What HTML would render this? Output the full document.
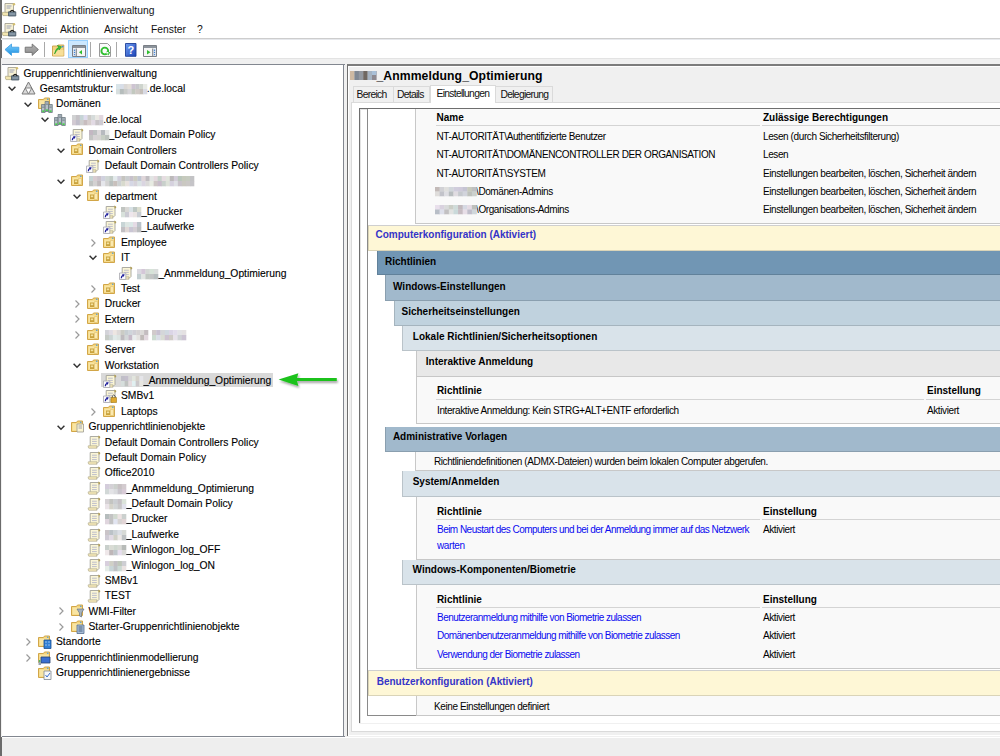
<!DOCTYPE html><html><head><meta charset="utf-8"><style>
*{margin:0;padding:0;box-sizing:border-box}
html,body{width:1000px;height:756px;overflow:hidden;background:#fff;font-family:"Liberation Sans", sans-serif;}
.ab{position:absolute}
.t{position:absolute;white-space:nowrap;color:#000;line-height:1}
.tr{font-size:10.3px;-webkit-text-stroke:0.12px #000}
.rp{font-size:10px;letter-spacing:-0.4px}
.rb{font-size:10px;font-weight:bold}
.blur{display:inline-block;vertical-align:-1px;height:8px}
svg{position:absolute;overflow:visible}

</style></head><body>
<div class="ab" style="left:0;top:0;width:1.5px;height:756px;background:#6b6b6b"></div>
<div class="t" style="left:21px;top:5.5px;font-size:10.3px;color:#111">Gruppenrichtlinienverwaltung</div>
<div class="t" style="left:23px;top:24.5px;font-size:10.3px;color:#111">Datei</div>
<div class="t" style="left:60px;top:24.5px;font-size:10.3px;color:#111">Aktion</div>
<div class="t" style="left:104px;top:24.5px;font-size:10.3px;color:#111">Ansicht</div>
<div class="t" style="left:151px;top:24.5px;font-size:10.3px;color:#111">Fenster</div>
<div class="t" style="left:197px;top:24.5px;font-size:10.3px;color:#111">?</div>
<div class="ab" style="left:1px;top:38px;width:999px;height:1px;background:#cdcdcd"></div>
<div class="ab" style="left:1px;top:39px;width:999px;height:1px;background:#e6e8ec"></div>
<div class="ab" style="left:1px;top:58px;width:999px;height:1px;background:#e3e3e3"></div>
<div class="ab" style="left:1px;top:59px;width:999px;height:678px;background:#f0f0f0"></div>
<div class="ab" style="left:1.5px;top:738px;width:999px;height:18px;background:#eeeeee"></div>
<div class="ab" style="left:44px;top:42px;width:1px;height:15px;background:#a9a9a9"></div>
<div class="ab" style="left:90px;top:42px;width:1px;height:15px;background:#a9a9a9"></div>
<div class="ab" style="left:116px;top:42px;width:1px;height:15px;background:#a9a9a9"></div>
<div class="ab" style="left:68px;top:40px;width:20px;height:18px;background:#cce8ff;border:1px solid #99d1ff"></div>
<svg style="left:0;top:0px" width="20" height="20" viewBox="0 0 20 20"><path d="M5 3.5 H13.5 V12.5 H5 Z" fill="#f7f1d3" stroke="#a5a294" stroke-width="0.9"/><circle cx="14" cy="4.2" r="1.2" fill="#d2bd6e"/><path d="M6.5 6 H11.5 M6.5 8 H10.5" stroke="#9aa0b8" stroke-width="1"/><path d="M2.5 12.3 H9 V15.6 H3 Q2 14 2.5 12.3 Z" fill="#f3e6b0" stroke="#b5ad88" stroke-width="0.8"/><path d="M8.5 11.8 H15.8 V16 H8.5 Z" fill="#6f8393" stroke="#4a5866" stroke-width="0.8"/><path d="M10 12 Q12.2 8.6 14.3 12" stroke="#1e1e1e" fill="none" stroke-width="1.2"/><path d="M9.5 14 H15 " stroke="#a9b6c0" stroke-width="0.8"/></svg>
<svg style="left:0;top:20px" width="20" height="20" viewBox="0 0 20 20"><path d="M5 3.5 H13.5 V12.5 H5 Z" fill="#f7f1d3" stroke="#a5a294" stroke-width="0.9"/><circle cx="14" cy="4.2" r="1.2" fill="#d2bd6e"/><path d="M6.5 6 H11.5 M6.5 8 H10.5" stroke="#9aa0b8" stroke-width="1"/><path d="M2.5 12.3 H9 V15.6 H3 Q2 14 2.5 12.3 Z" fill="#f3e6b0" stroke="#b5ad88" stroke-width="0.8"/><path d="M8.5 11.8 H15.8 V16 H8.5 Z" fill="#6f8393" stroke="#4a5866" stroke-width="0.8"/><path d="M10 12 Q12.2 8.6 14.3 12" stroke="#1e1e1e" fill="none" stroke-width="1.2"/><path d="M9.5 14 H15 " stroke="#a9b6c0" stroke-width="0.8"/></svg>
<svg style="left:0;top:38px" width="60" height="22" viewBox="0 38 60 22"><defs><linearGradient id="gb" x1="0" y1="0" x2="0" y2="1"><stop offset="0" stop-color="#7fd0ff"/><stop offset="1" stop-color="#1a8fe0"/></linearGradient><linearGradient id="gg" x1="0" y1="0" x2="0" y2="1"><stop offset="0" stop-color="#b5b5b5"/><stop offset="1" stop-color="#8a8a8a"/></linearGradient></defs><path d="M5 49.6 L11.5 44 V47.2 H18.8 V52.4 H11.5 V55.4 Z" fill="url(#gb)" stroke="#3a9ae0" stroke-width="0.8" stroke-linejoin="round"/><path d="M38.4 49.6 L32.2 44 V47.2 H25.2 V52.4 H32.2 V55.4 Z" fill="url(#gg)" stroke="#6e6e6e" stroke-width="0.9" stroke-linejoin="round"/></svg>
<svg style="left:50px;top:42px" width="18" height="16" viewBox="0 0 18 16"><path d="M2.5 4 H7 L8 3 H13.8 V14 H2.5 Z" fill="#f3d27c" stroke="#c9a04c" stroke-width="0.9"/><path d="M3 8 H13.5 V13.6 H3 Z" fill="#f7df98"/><path d="M4.5 12 Q5.5 6.5 8.5 5.5 L7.5 3.5 L11.5 4.8 L9.2 8 L9 6.5 Q6.5 8 4.5 12 Z" fill="#39c43a" stroke="#1f9a22" stroke-width="0.6"/><circle cx="12.6" cy="4.6" r="0.9" fill="#3a8ee0"/></svg>
<svg style="left:71.5px;top:44.5px" width="15" height="13" viewBox="0 0 15 13"><path d="M0.5 0.5 H13.5 V11.5 H0.5 Z" fill="#f6f6f6" stroke="#7a7f86" stroke-width="1"/><path d="M1 1 H13 V3 H1 Z" fill="#8c939b"/><path d="M1 3.5 H4 V11 H1 Z" fill="#dfe6ee"/><path d="M4.3 3.5 V11" stroke="#7a7f86"/><circle cx="2.5" cy="5.2" r="0.7" fill="#3b7fd6"/><circle cx="2.5" cy="7.4" r="0.7" fill="#3b7fd6"/><circle cx="2.5" cy="9.6" r="0.7" fill="#3b7fd6"/><path d="M7 7.3 L10 5 V9.6 Z" fill="#2fbf2f"/></svg>
<svg style="left:143px;top:44.5px" width="15" height="13" viewBox="0 0 15 13"><path d="M0.5 0.5 H13.5 V11.5 H0.5 Z" fill="#f6f6f6" stroke="#7a7f86" stroke-width="1"/><path d="M1 1 H13 V3 H1 Z" fill="#8c939b"/><path d="M10 3.5 H13 V11 H10 Z" fill="#dfe6ee"/><path d="M9.7 3.5 V11" stroke="#7a7f86"/><circle cx="11.5" cy="5.2" r="0.7" fill="#3b7fd6"/><circle cx="11.5" cy="7.4" r="0.7" fill="#3b7fd6"/><circle cx="11.5" cy="9.6" r="0.7" fill="#3b7fd6"/><path d="M7.5 7.3 L4 5 V9.6 Z" fill="#2fbf2f"/></svg>
<svg style="left:98.5px;top:42.5px" width="13" height="15" viewBox="0 0 13 15"><path d="M0.5 0.5 H8.5 L11.5 3.5 V13.5 H0.5 Z" fill="#fbfbfb" stroke="#8f8f8f" stroke-width="0.9"/><circle cx="5.8" cy="8" r="3.4" fill="none" stroke="#2fbf2f" stroke-width="1.9"/><path d="M7.2 8.6 L11.4 9.2 L9.2 12.6 Z" fill="#2fbf2f"/><rect x="7.4" y="9" width="2" height="1.6" fill="#fbfbfb"/></svg>
<svg style="left:124.5px;top:42.5px" width="12" height="14" viewBox="0 0 12 14"><defs><linearGradient id="gh" x1="0" y1="0" x2="1" y2="1"><stop offset="0" stop-color="#6f9cf0"/><stop offset="1" stop-color="#1c44b8"/></linearGradient></defs><path d="M0.5 0.5 H11 V13.3 H0.5 Z" fill="url(#gh)" stroke="#1e3f99" stroke-width="0.9"/><text x="5.8" y="11" font-family="Liberation Sans" font-weight="bold" font-size="11" fill="#fff" text-anchor="middle">?</text></svg>
<div class="ab" style="left:2px;top:64px;width:342px;height:673px;background:#fff;border:1px solid #828790;border-left:none"></div>
<div class="ab" style="left:1.5px;top:64px;width:343px;height:1px;background:#828790"></div>
<div class="ab" style="left:1.5px;top:736px;width:343px;height:1.2px;background:#828790"></div>
<svg style="left:2.70px;top:64.00px" width="20" height="20" viewBox="0 0 20 20"><path d="M5 3.5 H13.5 V12.5 H5 Z" fill="#f7f1d3" stroke="#a5a294" stroke-width="0.9"/><circle cx="14" cy="4.2" r="1.2" fill="#d2bd6e"/><path d="M6.5 6 H11.5 M6.5 8 H10.5" stroke="#9aa0b8" stroke-width="1"/><path d="M2.5 12.3 H9 V15.6 H3 Q2 14 2.5 12.3 Z" fill="#f3e6b0" stroke="#b5ad88" stroke-width="0.8"/><path d="M8.5 11.8 H15.8 V16 H8.5 Z" fill="#6f8393" stroke="#4a5866" stroke-width="0.8"/><path d="M10 12 Q12.2 8.6 14.3 12" stroke="#1e1e1e" fill="none" stroke-width="1.2"/><path d="M9.5 14 H15 " stroke="#a9b6c0" stroke-width="0.8"/></svg>
<div class="t tr" style="left:23.5px;top:68.70px">Gruppenrichtlinienverwaltung</div>
<svg style="left:8.0px;top:86.37px" width="8" height="5"><path d="M0.6 0.8 L4 4.2 L7.4 0.8" fill="none" stroke="#333" stroke-width="1.5"/></svg>
<svg style="left:21.25px;top:81.37px" width="15" height="14" viewBox="0 0 15 14"><path d="M7.5 1 L14 13 H1 Z" fill="#d9d9d9" stroke="#7a7a7a" stroke-width="1" stroke-linejoin="round"/><path d="M4.25 7 H10.75 L7.5 13 Z" fill="#fff" stroke="#7a7a7a" stroke-width="0.9"/></svg>
<div class="t tr" style="left:39.75px;top:84.07px">Gesamtstruktur: <svg style="position:relative;display:inline-block;vertical-align:-2px" width="31" height="10"><rect x="0.00" y="0.0" width="4.17" height="5.3" fill="#d9e5e9"/><rect x="3.88" y="0.0" width="4.17" height="5.3" fill="#d8dee8"/><rect x="7.75" y="0.0" width="4.17" height="5.3" fill="#dbd8d6"/><rect x="11.62" y="0.0" width="4.17" height="5.3" fill="#e4dfd9"/><rect x="15.50" y="0.0" width="4.17" height="5.3" fill="#cec4d2"/><rect x="19.38" y="0.0" width="4.17" height="5.3" fill="#c7c8cb"/><rect x="23.25" y="0.0" width="4.17" height="5.3" fill="#ced4cd"/><rect x="27.12" y="0.0" width="4.17" height="5.3" fill="#e8eae5"/><rect x="0.00" y="5.0" width="4.17" height="5.3" fill="#d8dfdf"/><rect x="3.88" y="5.0" width="4.17" height="5.3" fill="#b6bdbc"/><rect x="7.75" y="5.0" width="4.17" height="5.3" fill="#c9cbc9"/><rect x="11.62" y="5.0" width="4.17" height="5.3" fill="#d6d5d9"/><rect x="15.50" y="5.0" width="4.17" height="5.3" fill="#c2c8bf"/><rect x="19.38" y="5.0" width="4.17" height="5.3" fill="#cfc9c5"/><rect x="23.25" y="5.0" width="4.17" height="5.3" fill="#c5bfba"/><rect x="27.12" y="5.0" width="4.17" height="5.3" fill="#d8dae4"/></svg>.de.local</div>
<svg style="left:24.25px;top:101.74px" width="8" height="5"><path d="M0.6 0.8 L4 4.2 L7.4 0.8" fill="none" stroke="#333" stroke-width="1.5"/></svg>
<svg style="left:38.00px;top:97.24px" width="14" height="14" viewBox="0 0 14 14"><path d="M0.5 2.5 H5.5 L6.5 1 H11.5 V11.5 H0.5 Z" fill="#f3d57f" stroke="#d2a648" stroke-width="1"/><path d="M1.5 3.5 H10.5 V10.5 H1.5 Z" fill="#f9e5a3"/><circle cx="9.8" cy="2.2" r="0.8" fill="#4a9ae0"/><path d="M3.5 7.5 h3.6 v8 h-3.6 Z" fill="#b5c0c8" stroke="#5f6b74" stroke-width="0.7"/><path d="M4.1 9.1 h2.4 M4.1 10.5 h2.4" stroke="#6f7b84" stroke-width="0.6"/><rect x="4.2" y="13.5" width="2.2" height="1.3" fill="#2fd12f"/><path d="M7.1 4.5 h3.6 v10 h-3.6 Z" fill="#b5c0c8" stroke="#5f6b74" stroke-width="0.7"/><path d="M7.699999999999999 6.1 h2.4 M7.699999999999999 7.5 h2.4" stroke="#6f7b84" stroke-width="0.6"/><rect x="7.8" y="12.5" width="2.2" height="1.3" fill="#2fd12f"/><path d="M10.7 7.5 h3.6 v8 h-3.6 Z" fill="#b5c0c8" stroke="#5f6b74" stroke-width="0.7"/><path d="M11.299999999999999 9.1 h2.4 M11.299999999999999 10.5 h2.4" stroke="#6f7b84" stroke-width="0.6"/><rect x="11.399999999999999" y="13.5" width="2.2" height="1.3" fill="#2fd12f"/></svg>
<div class="t tr" style="left:56.0px;top:99.44px">Domänen</div>
<svg style="left:40.5px;top:117.11px" width="8" height="5"><path d="M0.6 0.8 L4 4.2 L7.4 0.8" fill="none" stroke="#333" stroke-width="1.5"/></svg>
<svg style="left:53.75px;top:112.61px" width="15" height="15" viewBox="0 0 15 15"><path d="M0.5 4.5 h3.6 v8 h-3.6 Z" fill="#b5c0c8" stroke="#5f6b74" stroke-width="0.7"/><path d="M1.1 6.1 h2.4 M1.1 7.5 h2.4" stroke="#6f7b84" stroke-width="0.6"/><rect x="1.2" y="10.5" width="2.2" height="1.3" fill="#2fd12f"/><path d="M4.1 1.5 h3.6 v10 h-3.6 Z" fill="#b5c0c8" stroke="#5f6b74" stroke-width="0.7"/><path d="M4.699999999999999 3.1 h2.4 M4.699999999999999 4.5 h2.4" stroke="#6f7b84" stroke-width="0.6"/><rect x="4.8" y="9.5" width="2.2" height="1.3" fill="#2fd12f"/><path d="M7.7 4.5 h3.6 v8 h-3.6 Z" fill="#b5c0c8" stroke="#5f6b74" stroke-width="0.7"/><path d="M8.3 6.1 h2.4 M8.3 7.5 h2.4" stroke="#6f7b84" stroke-width="0.6"/><rect x="8.4" y="10.5" width="2.2" height="1.3" fill="#2fd12f"/></svg>
<div class="t tr" style="left:72.25px;top:114.81px"><svg style="position:relative;display:inline-block;vertical-align:-2px" width="31" height="10"><rect x="0.00" y="0.0" width="4.17" height="5.3" fill="#d1d2d3"/><rect x="3.88" y="0.0" width="4.17" height="5.3" fill="#c5c2c6"/><rect x="7.75" y="0.0" width="4.17" height="5.3" fill="#c6d4d6"/><rect x="11.62" y="0.0" width="4.17" height="5.3" fill="#dfdcee"/><rect x="15.50" y="0.0" width="4.17" height="5.3" fill="#cdccc9"/><rect x="19.38" y="0.0" width="4.17" height="5.3" fill="#d5dbda"/><rect x="23.25" y="0.0" width="4.17" height="5.3" fill="#e9e8e3"/><rect x="27.12" y="0.0" width="4.17" height="5.3" fill="#e1d7de"/><rect x="0.00" y="5.0" width="4.17" height="5.3" fill="#d2cad3"/><rect x="3.88" y="5.0" width="4.17" height="5.3" fill="#c1becb"/><rect x="7.75" y="5.0" width="4.17" height="5.3" fill="#cecece"/><rect x="11.62" y="5.0" width="4.17" height="5.3" fill="#c8bdbf"/><rect x="15.50" y="5.0" width="4.17" height="5.3" fill="#d7cece"/><rect x="19.38" y="5.0" width="4.17" height="5.3" fill="#e2dae4"/><rect x="23.25" y="5.0" width="4.17" height="5.3" fill="#c9c4c8"/><rect x="27.12" y="5.0" width="4.17" height="5.3" fill="#cecbd2"/></svg>.de.local</div>
<svg style="left:70.00px;top:127.98px" width="14" height="14" viewBox="0 0 14 14"><path d="M3.2 1.5 H12 V10.5 Q11 12 9.5 12.5 H3.2 Z" fill="#fbf6d6" stroke="#a3a19a" stroke-width="0.9"/><path d="M11.3 1 Q13.2 1 12.8 3 L11.5 3" fill="#c9b465" stroke="#9c8a40" stroke-width="0.6"/><path d="M5 4.2 H9.8 M5 6.4 H9.8 M5 8.6 H9.8" stroke="#a4a6c6" stroke-width="0.7"/><path d="M1.3 10.8 H10 Q9 12.5 10 13.2 H1.8 Q0.8 12 1.3 10.8 Z" fill="#f6eab8" stroke="#b3ad90" stroke-width="0.7"/><path d="M0.5 7 H6.8 V13.5 H0.5 Z" fill="#fafafc" stroke="#a8a8ae" stroke-width="0.8"/><path d="M2.3 12.3 Q2.3 10 4.2 9.3" stroke="#1c1c9a" stroke-width="1.3" fill="none"/><path d="M3.2 8 L5.8 8.6 L4.4 11 Z" fill="#1c1c9a"/></svg>
<div class="t tr" style="left:88.5px;top:130.18px"><svg style="position:relative;display:inline-block;vertical-align:-2px" width="20" height="10"><rect x="0.00" y="0.0" width="4.30" height="5.3" fill="#c3b7c2"/><rect x="4.00" y="0.0" width="4.30" height="5.3" fill="#bec1c2"/><rect x="8.00" y="0.0" width="4.30" height="5.3" fill="#dddadc"/><rect x="12.00" y="0.0" width="4.30" height="5.3" fill="#b7babf"/><rect x="16.00" y="0.0" width="4.30" height="5.3" fill="#e4e6e5"/><rect x="0.00" y="5.0" width="4.30" height="5.3" fill="#c3c4c3"/><rect x="4.00" y="5.0" width="4.30" height="5.3" fill="#d7d3d5"/><rect x="8.00" y="5.0" width="4.30" height="5.3" fill="#d5d4d2"/><rect x="12.00" y="5.0" width="4.30" height="5.3" fill="#c7cec4"/><rect x="16.00" y="5.0" width="4.30" height="5.3" fill="#bcc2bd"/></svg>_Default Domain Policy</div>
<svg style="left:56.75px;top:147.85px" width="8" height="5"><path d="M0.6 0.8 L4 4.2 L7.4 0.8" fill="none" stroke="#333" stroke-width="1.5"/></svg>
<svg style="left:70.50px;top:143.35px" width="14" height="14" viewBox="0 0 14 14"><path d="M0.5 2.5 H5.5 L6.5 1 H11.5 V11.5 H0.5 Z" fill="#f3d57f" stroke="#d2a648" stroke-width="1"/><path d="M1.5 3.5 H10.5 V10.5 H1.5 Z" fill="#f9e5a3"/><circle cx="9.8" cy="2.2" r="0.8" fill="#4a9ae0"/><path d="M3 5.5 H7 V10 H3 Z" fill="#c9a23e"/><path d="M3.8 6.5 H6.2 V8.2 H3.8 Z" fill="#f4e2a0"/><path d="M7.5 4.5 H10.5 V10.5 H7.5 Z" fill="#fbe9b0" stroke="#d9b45c" stroke-width="0.5"/></svg>
<div class="t tr" style="left:88.5px;top:145.55px">Domain Controllers</div>
<svg style="left:86.25px;top:158.72px" width="14" height="14" viewBox="0 0 14 14"><path d="M3.2 1.5 H12 V10.5 Q11 12 9.5 12.5 H3.2 Z" fill="#fbf6d6" stroke="#a3a19a" stroke-width="0.9"/><path d="M11.3 1 Q13.2 1 12.8 3 L11.5 3" fill="#c9b465" stroke="#9c8a40" stroke-width="0.6"/><path d="M5 4.2 H9.8 M5 6.4 H9.8 M5 8.6 H9.8" stroke="#a4a6c6" stroke-width="0.7"/><path d="M1.3 10.8 H10 Q9 12.5 10 13.2 H1.8 Q0.8 12 1.3 10.8 Z" fill="#f6eab8" stroke="#b3ad90" stroke-width="0.7"/><path d="M0.5 7 H6.8 V13.5 H0.5 Z" fill="#fafafc" stroke="#a8a8ae" stroke-width="0.8"/><path d="M2.3 12.3 Q2.3 10 4.2 9.3" stroke="#1c1c9a" stroke-width="1.3" fill="none"/><path d="M3.2 8 L5.8 8.6 L4.4 11 Z" fill="#1c1c9a"/></svg>
<div class="t tr" style="left:104.75px;top:160.92px">Default Domain Controllers Policy</div>
<svg style="left:56.75px;top:178.59px" width="8" height="5"><path d="M0.6 0.8 L4 4.2 L7.4 0.8" fill="none" stroke="#333" stroke-width="1.5"/></svg>
<svg style="left:70.50px;top:174.09px" width="14" height="14" viewBox="0 0 14 14"><path d="M0.5 2.5 H5.5 L6.5 1 H11.5 V11.5 H0.5 Z" fill="#f3d57f" stroke="#d2a648" stroke-width="1"/><path d="M1.5 3.5 H10.5 V10.5 H1.5 Z" fill="#f9e5a3"/><circle cx="9.8" cy="2.2" r="0.8" fill="#4a9ae0"/><path d="M3 5.5 H7 V10 H3 Z" fill="#c9a23e"/><path d="M3.8 6.5 H6.2 V8.2 H3.8 Z" fill="#f4e2a0"/><path d="M7.5 4.5 H10.5 V10.5 H7.5 Z" fill="#fbe9b0" stroke="#d9b45c" stroke-width="0.5"/></svg>
<div class="t tr" style="left:88.5px;top:176.29px"><svg style="position:relative;display:inline-block;vertical-align:-2px" width="105" height="10"><rect x="0.00" y="0.0" width="4.34" height="5.3" fill="#c6d5d6"/><rect x="4.04" y="0.0" width="4.34" height="5.3" fill="#d8ccd1"/><rect x="8.08" y="0.0" width="4.34" height="5.3" fill="#cbc3cb"/><rect x="12.12" y="0.0" width="4.34" height="5.3" fill="#d0d1de"/><rect x="16.15" y="0.0" width="4.34" height="5.3" fill="#d0d7d4"/><rect x="20.19" y="0.0" width="4.34" height="5.3" fill="#c3cdc7"/><rect x="24.23" y="0.0" width="4.34" height="5.3" fill="#e4ebed"/><rect x="28.27" y="0.0" width="4.34" height="5.3" fill="#d1cfdc"/><rect x="32.31" y="0.0" width="4.34" height="5.3" fill="#c5c4bf"/><rect x="36.35" y="0.0" width="4.34" height="5.3" fill="#c9cdcf"/><rect x="40.38" y="0.0" width="4.34" height="5.3" fill="#c7c1cb"/><rect x="44.42" y="0.0" width="4.34" height="5.3" fill="#ccccc1"/><rect x="48.46" y="0.0" width="4.34" height="5.3" fill="#c0c6d2"/><rect x="52.50" y="0.0" width="4.34" height="5.3" fill="#e0d6d9"/><rect x="56.54" y="0.0" width="4.34" height="5.3" fill="#c0bdc1"/><rect x="60.58" y="0.0" width="4.34" height="5.3" fill="#e2e5e4"/><rect x="64.62" y="0.0" width="4.34" height="5.3" fill="#e4d9de"/><rect x="68.65" y="0.0" width="4.34" height="5.3" fill="#c5d1ca"/><rect x="72.69" y="0.0" width="4.34" height="5.3" fill="#e6dce1"/><rect x="76.73" y="0.0" width="4.34" height="5.3" fill="#e1e5dd"/><rect x="80.77" y="0.0" width="4.34" height="5.3" fill="#bcb9ba"/><rect x="84.81" y="0.0" width="4.34" height="5.3" fill="#d3cdd9"/><rect x="88.85" y="0.0" width="4.34" height="5.3" fill="#bac6bc"/><rect x="92.88" y="0.0" width="4.34" height="5.3" fill="#c6cabc"/><rect x="96.92" y="0.0" width="4.34" height="5.3" fill="#c6cbc0"/><rect x="100.96" y="0.0" width="4.34" height="5.3" fill="#c3c3c5"/><rect x="0.00" y="5.0" width="4.34" height="5.3" fill="#c0c3c1"/><rect x="4.04" y="5.0" width="4.34" height="5.3" fill="#d3d1d1"/><rect x="8.08" y="5.0" width="4.34" height="5.3" fill="#c1babd"/><rect x="12.12" y="5.0" width="4.34" height="5.3" fill="#e5e6eb"/><rect x="16.15" y="5.0" width="4.34" height="5.3" fill="#d3d3d3"/><rect x="20.19" y="5.0" width="4.34" height="5.3" fill="#b9c0be"/><rect x="24.23" y="5.0" width="4.34" height="5.3" fill="#c8c0bc"/><rect x="28.27" y="5.0" width="4.34" height="5.3" fill="#cdd1d2"/><rect x="32.31" y="5.0" width="4.34" height="5.3" fill="#d8dacd"/><rect x="36.35" y="5.0" width="4.34" height="5.3" fill="#e8e1de"/><rect x="40.38" y="5.0" width="4.34" height="5.3" fill="#d5d7e5"/><rect x="44.42" y="5.0" width="4.34" height="5.3" fill="#d6d2da"/><rect x="48.46" y="5.0" width="4.34" height="5.3" fill="#dbe3e4"/><rect x="52.50" y="5.0" width="4.34" height="5.3" fill="#dad5e1"/><rect x="56.54" y="5.0" width="4.34" height="5.3" fill="#dbdad9"/><rect x="60.58" y="5.0" width="4.34" height="5.3" fill="#e7ebe2"/><rect x="64.62" y="5.0" width="4.34" height="5.3" fill="#cdc6c5"/><rect x="68.65" y="5.0" width="4.34" height="5.3" fill="#c8bcca"/><rect x="72.69" y="5.0" width="4.34" height="5.3" fill="#c8d0cb"/><rect x="76.73" y="5.0" width="4.34" height="5.3" fill="#dde2d9"/><rect x="80.77" y="5.0" width="4.34" height="5.3" fill="#d5d1de"/><rect x="84.81" y="5.0" width="4.34" height="5.3" fill="#dfe1e5"/><rect x="88.85" y="5.0" width="4.34" height="5.3" fill="#c9c3ca"/><rect x="92.88" y="5.0" width="4.34" height="5.3" fill="#cac8c1"/><rect x="96.92" y="5.0" width="4.34" height="5.3" fill="#cbc8c6"/><rect x="100.96" y="5.0" width="4.34" height="5.3" fill="#c5c4c8"/></svg></div>
<svg style="left:73.0px;top:193.96px" width="8" height="5"><path d="M0.6 0.8 L4 4.2 L7.4 0.8" fill="none" stroke="#333" stroke-width="1.5"/></svg>
<svg style="left:86.75px;top:189.46px" width="14" height="14" viewBox="0 0 14 14"><path d="M0.5 2.5 H5.5 L6.5 1 H11.5 V11.5 H0.5 Z" fill="#f3d57f" stroke="#d2a648" stroke-width="1"/><path d="M1.5 3.5 H10.5 V10.5 H1.5 Z" fill="#f9e5a3"/><circle cx="9.8" cy="2.2" r="0.8" fill="#4a9ae0"/><path d="M3 5.5 H7 V10 H3 Z" fill="#c9a23e"/><path d="M3.8 6.5 H6.2 V8.2 H3.8 Z" fill="#f4e2a0"/><path d="M7.5 4.5 H10.5 V10.5 H7.5 Z" fill="#fbe9b0" stroke="#d9b45c" stroke-width="0.5"/></svg>
<div class="t tr" style="left:104.75px;top:191.66px">department</div>
<svg style="left:102.50px;top:204.83px" width="14" height="14" viewBox="0 0 14 14"><path d="M3.2 1.5 H12 V10.5 Q11 12 9.5 12.5 H3.2 Z" fill="#fbf6d6" stroke="#a3a19a" stroke-width="0.9"/><path d="M11.3 1 Q13.2 1 12.8 3 L11.5 3" fill="#c9b465" stroke="#9c8a40" stroke-width="0.6"/><path d="M5 4.2 H9.8 M5 6.4 H9.8 M5 8.6 H9.8" stroke="#a4a6c6" stroke-width="0.7"/><path d="M1.3 10.8 H10 Q9 12.5 10 13.2 H1.8 Q0.8 12 1.3 10.8 Z" fill="#f6eab8" stroke="#b3ad90" stroke-width="0.7"/><path d="M0.5 7 H6.8 V13.5 H0.5 Z" fill="#fafafc" stroke="#a8a8ae" stroke-width="0.8"/><path d="M2.3 12.3 Q2.3 10 4.2 9.3" stroke="#1c1c9a" stroke-width="1.3" fill="none"/><path d="M3.2 8 L5.8 8.6 L4.4 11 Z" fill="#1c1c9a"/></svg>
<div class="t tr" style="left:121.0px;top:207.03px"><svg style="position:relative;display:inline-block;vertical-align:-2px" width="20" height="10"><rect x="0.00" y="0.0" width="4.30" height="5.3" fill="#c1c5c1"/><rect x="4.00" y="0.0" width="4.30" height="5.3" fill="#d9d8d5"/><rect x="8.00" y="0.0" width="4.30" height="5.3" fill="#d8e1e5"/><rect x="12.00" y="0.0" width="4.30" height="5.3" fill="#bec7c3"/><rect x="16.00" y="0.0" width="4.30" height="5.3" fill="#dcded0"/><rect x="0.00" y="5.0" width="4.30" height="5.3" fill="#d8e1db"/><rect x="4.00" y="5.0" width="4.30" height="5.3" fill="#cbcbd3"/><rect x="8.00" y="5.0" width="4.30" height="5.3" fill="#eee6ec"/><rect x="12.00" y="5.0" width="4.30" height="5.3" fill="#e9e3e2"/><rect x="16.00" y="5.0" width="4.30" height="5.3" fill="#c8ccd2"/></svg>_Drucker</div>
<svg style="left:102.50px;top:220.20px" width="14" height="14" viewBox="0 0 14 14"><path d="M3.2 1.5 H12 V10.5 Q11 12 9.5 12.5 H3.2 Z" fill="#fbf6d6" stroke="#a3a19a" stroke-width="0.9"/><path d="M11.3 1 Q13.2 1 12.8 3 L11.5 3" fill="#c9b465" stroke="#9c8a40" stroke-width="0.6"/><path d="M5 4.2 H9.8 M5 6.4 H9.8 M5 8.6 H9.8" stroke="#a4a6c6" stroke-width="0.7"/><path d="M1.3 10.8 H10 Q9 12.5 10 13.2 H1.8 Q0.8 12 1.3 10.8 Z" fill="#f6eab8" stroke="#b3ad90" stroke-width="0.7"/><path d="M0.5 7 H6.8 V13.5 H0.5 Z" fill="#fafafc" stroke="#a8a8ae" stroke-width="0.8"/><path d="M2.3 12.3 Q2.3 10 4.2 9.3" stroke="#1c1c9a" stroke-width="1.3" fill="none"/><path d="M3.2 8 L5.8 8.6 L4.4 11 Z" fill="#1c1c9a"/></svg>
<div class="t tr" style="left:121.0px;top:222.40px"><svg style="position:relative;display:inline-block;vertical-align:-2px" width="20" height="10"><rect x="0.00" y="0.0" width="4.30" height="5.3" fill="#c8d5d6"/><rect x="4.00" y="0.0" width="4.30" height="5.3" fill="#dde6e3"/><rect x="8.00" y="0.0" width="4.30" height="5.3" fill="#dbe8e7"/><rect x="12.00" y="0.0" width="4.30" height="5.3" fill="#e5dbe5"/><rect x="16.00" y="0.0" width="4.30" height="5.3" fill="#bbc3ca"/><rect x="0.00" y="5.0" width="4.30" height="5.3" fill="#c2c0c4"/><rect x="4.00" y="5.0" width="4.30" height="5.3" fill="#e0d8d6"/><rect x="8.00" y="5.0" width="4.30" height="5.3" fill="#cac6d4"/><rect x="12.00" y="5.0" width="4.30" height="5.3" fill="#d3ced3"/><rect x="16.00" y="5.0" width="4.30" height="5.3" fill="#bbbdbf"/></svg>_Laufwerke</div>
<svg style="left:91.25px;top:238.57px" width="5" height="8"><path d="M0.5 0.5 L4 4 L0.5 7.5" fill="none" stroke="#9a9a9a" stroke-width="1.2"/></svg>
<svg style="left:103.00px;top:235.57px" width="14" height="14" viewBox="0 0 14 14"><path d="M0.5 2.5 H5.5 L6.5 1 H11.5 V11.5 H0.5 Z" fill="#f3d57f" stroke="#d2a648" stroke-width="1"/><path d="M1.5 3.5 H10.5 V10.5 H1.5 Z" fill="#f9e5a3"/><circle cx="9.8" cy="2.2" r="0.8" fill="#4a9ae0"/><path d="M3 5.5 H7 V10 H3 Z" fill="#c9a23e"/><path d="M3.8 6.5 H6.2 V8.2 H3.8 Z" fill="#f4e2a0"/><path d="M7.5 4.5 H10.5 V10.5 H7.5 Z" fill="#fbe9b0" stroke="#d9b45c" stroke-width="0.5"/></svg>
<div class="t tr" style="left:121.0px;top:237.77px">Employee</div>
<svg style="left:89.25px;top:255.44px" width="8" height="5"><path d="M0.6 0.8 L4 4.2 L7.4 0.8" fill="none" stroke="#333" stroke-width="1.5"/></svg>
<svg style="left:103.00px;top:250.94px" width="14" height="14" viewBox="0 0 14 14"><path d="M0.5 2.5 H5.5 L6.5 1 H11.5 V11.5 H0.5 Z" fill="#f3d57f" stroke="#d2a648" stroke-width="1"/><path d="M1.5 3.5 H10.5 V10.5 H1.5 Z" fill="#f9e5a3"/><circle cx="9.8" cy="2.2" r="0.8" fill="#4a9ae0"/><path d="M3 5.5 H7 V10 H3 Z" fill="#c9a23e"/><path d="M3.8 6.5 H6.2 V8.2 H3.8 Z" fill="#f4e2a0"/><path d="M7.5 4.5 H10.5 V10.5 H7.5 Z" fill="#fbe9b0" stroke="#d9b45c" stroke-width="0.5"/></svg>
<div class="t tr" style="left:121.0px;top:253.14px">IT</div>
<svg style="left:118.75px;top:266.31px" width="14" height="14" viewBox="0 0 14 14"><path d="M3.2 1.5 H12 V10.5 Q11 12 9.5 12.5 H3.2 Z" fill="#fbf6d6" stroke="#a3a19a" stroke-width="0.9"/><path d="M11.3 1 Q13.2 1 12.8 3 L11.5 3" fill="#c9b465" stroke="#9c8a40" stroke-width="0.6"/><path d="M5 4.2 H9.8 M5 6.4 H9.8 M5 8.6 H9.8" stroke="#a4a6c6" stroke-width="0.7"/><path d="M1.3 10.8 H10 Q9 12.5 10 13.2 H1.8 Q0.8 12 1.3 10.8 Z" fill="#f6eab8" stroke="#b3ad90" stroke-width="0.7"/><path d="M0.5 7 H6.8 V13.5 H0.5 Z" fill="#fafafc" stroke="#a8a8ae" stroke-width="0.8"/><path d="M2.3 12.3 Q2.3 10 4.2 9.3" stroke="#1c1c9a" stroke-width="1.3" fill="none"/><path d="M3.2 8 L5.8 8.6 L4.4 11 Z" fill="#1c1c9a"/></svg>
<div class="t tr" style="left:137.25px;top:268.51px"><svg style="position:relative;display:inline-block;vertical-align:-2px" width="21" height="10"><rect x="0.00" y="0.0" width="4.50" height="5.3" fill="#dbd9e0"/><rect x="4.20" y="0.0" width="4.50" height="5.3" fill="#d4c7d8"/><rect x="8.40" y="0.0" width="4.50" height="5.3" fill="#d4d8d5"/><rect x="12.60" y="0.0" width="4.50" height="5.3" fill="#d6e3d8"/><rect x="16.80" y="0.0" width="4.50" height="5.3" fill="#dadddc"/><rect x="0.00" y="5.0" width="4.50" height="5.3" fill="#c2ced1"/><rect x="4.20" y="5.0" width="4.50" height="5.3" fill="#e2e5e3"/><rect x="8.40" y="5.0" width="4.50" height="5.3" fill="#c2c8c3"/><rect x="12.60" y="5.0" width="4.50" height="5.3" fill="#c3c5c5"/><rect x="16.80" y="5.0" width="4.50" height="5.3" fill="#b6bebf"/></svg>_Anmmeldung_Optimierung</div>
<svg style="left:91.25px;top:284.68px" width="5" height="8"><path d="M0.5 0.5 L4 4 L0.5 7.5" fill="none" stroke="#9a9a9a" stroke-width="1.2"/></svg>
<svg style="left:103.00px;top:281.68px" width="14" height="14" viewBox="0 0 14 14"><path d="M0.5 2.5 H5.5 L6.5 1 H11.5 V11.5 H0.5 Z" fill="#f3d57f" stroke="#d2a648" stroke-width="1"/><path d="M1.5 3.5 H10.5 V10.5 H1.5 Z" fill="#f9e5a3"/><circle cx="9.8" cy="2.2" r="0.8" fill="#4a9ae0"/><path d="M3 5.5 H7 V10 H3 Z" fill="#c9a23e"/><path d="M3.8 6.5 H6.2 V8.2 H3.8 Z" fill="#f4e2a0"/><path d="M7.5 4.5 H10.5 V10.5 H7.5 Z" fill="#fbe9b0" stroke="#d9b45c" stroke-width="0.5"/></svg>
<div class="t tr" style="left:121.0px;top:283.88px">Test</div>
<svg style="left:75.0px;top:300.05px" width="5" height="8"><path d="M0.5 0.5 L4 4 L0.5 7.5" fill="none" stroke="#9a9a9a" stroke-width="1.2"/></svg>
<svg style="left:86.75px;top:297.05px" width="14" height="14" viewBox="0 0 14 14"><path d="M0.5 2.5 H5.5 L6.5 1 H11.5 V11.5 H0.5 Z" fill="#f3d57f" stroke="#d2a648" stroke-width="1"/><path d="M1.5 3.5 H10.5 V10.5 H1.5 Z" fill="#f9e5a3"/><circle cx="9.8" cy="2.2" r="0.8" fill="#4a9ae0"/><path d="M3 5.5 H7 V10 H3 Z" fill="#c9a23e"/><path d="M3.8 6.5 H6.2 V8.2 H3.8 Z" fill="#f4e2a0"/><path d="M7.5 4.5 H10.5 V10.5 H7.5 Z" fill="#fbe9b0" stroke="#d9b45c" stroke-width="0.5"/></svg>
<div class="t tr" style="left:104.75px;top:299.25px">Drucker</div>
<svg style="left:75.0px;top:315.42px" width="5" height="8"><path d="M0.5 0.5 L4 4 L0.5 7.5" fill="none" stroke="#9a9a9a" stroke-width="1.2"/></svg>
<svg style="left:86.75px;top:312.42px" width="14" height="14" viewBox="0 0 14 14"><path d="M0.5 2.5 H5.5 L6.5 1 H11.5 V11.5 H0.5 Z" fill="#f3d57f" stroke="#d2a648" stroke-width="1"/><path d="M1.5 3.5 H10.5 V10.5 H1.5 Z" fill="#f9e5a3"/><circle cx="9.8" cy="2.2" r="0.8" fill="#4a9ae0"/><path d="M3 5.5 H7 V10 H3 Z" fill="#c9a23e"/><path d="M3.8 6.5 H6.2 V8.2 H3.8 Z" fill="#f4e2a0"/><path d="M7.5 4.5 H10.5 V10.5 H7.5 Z" fill="#fbe9b0" stroke="#d9b45c" stroke-width="0.5"/></svg>
<div class="t tr" style="left:104.75px;top:314.62px">Extern</div>
<svg style="left:75.0px;top:330.79px" width="5" height="8"><path d="M0.5 0.5 L4 4 L0.5 7.5" fill="none" stroke="#9a9a9a" stroke-width="1.2"/></svg>
<svg style="left:86.75px;top:327.79px" width="14" height="14" viewBox="0 0 14 14"><path d="M0.5 2.5 H5.5 L6.5 1 H11.5 V11.5 H0.5 Z" fill="#f3d57f" stroke="#d2a648" stroke-width="1"/><path d="M1.5 3.5 H10.5 V10.5 H1.5 Z" fill="#f9e5a3"/><circle cx="9.8" cy="2.2" r="0.8" fill="#4a9ae0"/><path d="M3 5.5 H7 V10 H3 Z" fill="#c9a23e"/><path d="M3.8 6.5 H6.2 V8.2 H3.8 Z" fill="#f4e2a0"/><path d="M7.5 4.5 H10.5 V10.5 H7.5 Z" fill="#fbe9b0" stroke="#d9b45c" stroke-width="0.5"/></svg>
<div class="t tr" style="left:104.75px;top:329.99px"><svg style="position:relative;display:inline-block;vertical-align:-2px" width="43" height="10"><rect x="0.00" y="0.0" width="4.21" height="5.3" fill="#d3d3d9"/><rect x="3.91" y="0.0" width="4.21" height="5.3" fill="#e0dce4"/><rect x="7.82" y="0.0" width="4.21" height="5.3" fill="#eee6e2"/><rect x="11.73" y="0.0" width="4.21" height="5.3" fill="#dedad9"/><rect x="15.64" y="0.0" width="4.21" height="5.3" fill="#cbccc5"/><rect x="19.55" y="0.0" width="4.21" height="5.3" fill="#c7ced2"/><rect x="23.45" y="0.0" width="4.21" height="5.3" fill="#cfd5db"/><rect x="27.36" y="0.0" width="4.21" height="5.3" fill="#d0cfd6"/><rect x="31.27" y="0.0" width="4.21" height="5.3" fill="#d5d2d3"/><rect x="35.18" y="0.0" width="4.21" height="5.3" fill="#dcdad8"/><rect x="39.09" y="0.0" width="4.21" height="5.3" fill="#c4bdc0"/><rect x="0.00" y="5.0" width="4.21" height="5.3" fill="#c6cbc6"/><rect x="3.91" y="5.0" width="4.21" height="5.3" fill="#ccd5d4"/><rect x="7.82" y="5.0" width="4.21" height="5.3" fill="#e1eae9"/><rect x="11.73" y="5.0" width="4.21" height="5.3" fill="#dde4e1"/><rect x="15.64" y="5.0" width="4.21" height="5.3" fill="#bebbbe"/><rect x="19.55" y="5.0" width="4.21" height="5.3" fill="#d3d7d8"/><rect x="23.45" y="5.0" width="4.21" height="5.3" fill="#c6bac8"/><rect x="27.36" y="5.0" width="4.21" height="5.3" fill="#e9edee"/><rect x="31.27" y="5.0" width="4.21" height="5.3" fill="#e4e2e0"/><rect x="35.18" y="5.0" width="4.21" height="5.3" fill="#c0bab8"/><rect x="39.09" y="5.0" width="4.21" height="5.3" fill="#e2d7de"/></svg><span style="display:inline-block;width:4px"></span><svg style="position:relative;display:inline-block;vertical-align:-2px" width="34" height="10"><rect x="0.00" y="0.0" width="4.55" height="5.3" fill="#d1cacb"/><rect x="4.25" y="0.0" width="4.55" height="5.3" fill="#c8c1d1"/><rect x="8.50" y="0.0" width="4.55" height="5.3" fill="#d4d6d9"/><rect x="12.75" y="0.0" width="4.55" height="5.3" fill="#d0d8e0"/><rect x="17.00" y="0.0" width="4.55" height="5.3" fill="#dbd5e6"/><rect x="21.25" y="0.0" width="4.55" height="5.3" fill="#e2ddeb"/><rect x="25.50" y="0.0" width="4.55" height="5.3" fill="#e3e3e6"/><rect x="29.75" y="0.0" width="4.55" height="5.3" fill="#e4e1e2"/><rect x="0.00" y="5.0" width="4.55" height="5.3" fill="#cddbd1"/><rect x="4.25" y="5.0" width="4.55" height="5.3" fill="#dadde7"/><rect x="8.50" y="5.0" width="4.55" height="5.3" fill="#d9dcd4"/><rect x="12.75" y="5.0" width="4.55" height="5.3" fill="#cdc2d0"/><rect x="17.00" y="5.0" width="4.55" height="5.3" fill="#cfcbc6"/><rect x="21.25" y="5.0" width="4.55" height="5.3" fill="#e7e2ea"/><rect x="25.50" y="5.0" width="4.55" height="5.3" fill="#d0d3d6"/><rect x="29.75" y="5.0" width="4.55" height="5.3" fill="#ccc4d3"/></svg></div>
<svg style="left:86.75px;top:343.16px" width="14" height="14" viewBox="0 0 14 14"><path d="M0.5 2.5 H5.5 L6.5 1 H11.5 V11.5 H0.5 Z" fill="#f3d57f" stroke="#d2a648" stroke-width="1"/><path d="M1.5 3.5 H10.5 V10.5 H1.5 Z" fill="#f9e5a3"/><circle cx="9.8" cy="2.2" r="0.8" fill="#4a9ae0"/><path d="M3 5.5 H7 V10 H3 Z" fill="#c9a23e"/><path d="M3.8 6.5 H6.2 V8.2 H3.8 Z" fill="#f4e2a0"/><path d="M7.5 4.5 H10.5 V10.5 H7.5 Z" fill="#fbe9b0" stroke="#d9b45c" stroke-width="0.5"/></svg>
<div class="t tr" style="left:104.75px;top:345.36px">Server</div>
<svg style="left:73.0px;top:363.03px" width="8" height="5"><path d="M0.6 0.8 L4 4.2 L7.4 0.8" fill="none" stroke="#333" stroke-width="1.5"/></svg>
<svg style="left:86.75px;top:358.53px" width="14" height="14" viewBox="0 0 14 14"><path d="M0.5 2.5 H5.5 L6.5 1 H11.5 V11.5 H0.5 Z" fill="#f3d57f" stroke="#d2a648" stroke-width="1"/><path d="M1.5 3.5 H10.5 V10.5 H1.5 Z" fill="#f9e5a3"/><circle cx="9.8" cy="2.2" r="0.8" fill="#4a9ae0"/><path d="M3 5.5 H7 V10 H3 Z" fill="#c9a23e"/><path d="M3.8 6.5 H6.2 V8.2 H3.8 Z" fill="#f4e2a0"/><path d="M7.5 4.5 H10.5 V10.5 H7.5 Z" fill="#fbe9b0" stroke="#d9b45c" stroke-width="0.5"/></svg>
<div class="t tr" style="left:104.75px;top:360.73px">Workstation</div>
<div class="ab" style="left:101px;top:372.60px;width:172px;height:14.5px;background:#d9d9d9"></div>
<svg style="left:102.50px;top:373.90px" width="14" height="14" viewBox="0 0 14 14"><path d="M3.2 1.5 H12 V10.5 Q11 12 9.5 12.5 H3.2 Z" fill="#fbf6d6" stroke="#a3a19a" stroke-width="0.9"/><path d="M11.3 1 Q13.2 1 12.8 3 L11.5 3" fill="#c9b465" stroke="#9c8a40" stroke-width="0.6"/><path d="M5 4.2 H9.8 M5 6.4 H9.8 M5 8.6 H9.8" stroke="#a4a6c6" stroke-width="0.7"/><path d="M1.3 10.8 H10 Q9 12.5 10 13.2 H1.8 Q0.8 12 1.3 10.8 Z" fill="#f6eab8" stroke="#b3ad90" stroke-width="0.7"/><path d="M0.5 7 H6.8 V13.5 H0.5 Z" fill="#fafafc" stroke="#a8a8ae" stroke-width="0.8"/><path d="M2.3 12.3 Q2.3 10 4.2 9.3" stroke="#1c1c9a" stroke-width="1.3" fill="none"/><path d="M3.2 8 L5.8 8.6 L4.4 11 Z" fill="#1c1c9a"/></svg>
<div class="t tr" style="left:121.0px;top:376.10px"><svg style="position:relative;display:inline-block;vertical-align:-2px" width="22" height="10"><rect x="0.00" y="0.0" width="3.97" height="5.3" fill="#c0bfc8"/><rect x="3.67" y="0.0" width="3.97" height="5.3" fill="#c4bfcc"/><rect x="7.33" y="0.0" width="3.97" height="5.3" fill="#d7d7d7"/><rect x="11.00" y="0.0" width="3.97" height="5.3" fill="#e2e6de"/><rect x="14.67" y="0.0" width="3.97" height="5.3" fill="#d4d1ca"/><rect x="18.33" y="0.0" width="3.97" height="5.3" fill="#e5e5e9"/><rect x="0.00" y="5.0" width="3.97" height="5.3" fill="#d6dedc"/><rect x="3.67" y="5.0" width="3.97" height="5.3" fill="#c0c3c1"/><rect x="7.33" y="5.0" width="3.97" height="5.3" fill="#e5dcdf"/><rect x="11.00" y="5.0" width="3.97" height="5.3" fill="#e1f0f1"/><rect x="14.67" y="5.0" width="3.97" height="5.3" fill="#cbc8ca"/><rect x="18.33" y="5.0" width="3.97" height="5.3" fill="#e8e7e2"/></svg>_Anmmeldung_Optimierung</div>
<svg style="left:102.50px;top:389.27px" width="14" height="14" viewBox="0 0 14 14"><path d="M3.2 1.5 H12 V10.5 Q11 12 9.5 12.5 H3.2 Z" fill="#fbf6d6" stroke="#a3a19a" stroke-width="0.9"/><path d="M11.3 1 Q13.2 1 12.8 3 L11.5 3" fill="#c9b465" stroke="#9c8a40" stroke-width="0.6"/><path d="M5 4.2 H9.8 M5 6.4 H9.8 M5 8.6 H9.8" stroke="#a4a6c6" stroke-width="0.7"/><path d="M1.3 10.8 H10 Q9 12.5 10 13.2 H1.8 Q0.8 12 1.3 10.8 Z" fill="#f6eab8" stroke="#b3ad90" stroke-width="0.7"/><path d="M0.5 7 H6.8 V13.5 H0.5 Z" fill="#fafafc" stroke="#a8a8ae" stroke-width="0.8"/><path d="M2.3 12.3 Q2.3 10 4.2 9.3" stroke="#1c1c9a" stroke-width="1.3" fill="none"/><path d="M3.2 8 L5.8 8.6 L4.4 11 Z" fill="#1c1c9a"/><path d="M8 8.5 H13.5 V13.5 H8 Z" fill="#e0a92e" stroke="#a07818" stroke-width="0.6"/><path d="M9.3 8.5 V7 Q10.75 4.8 12.2 7 V8.5" stroke="#555" fill="none" stroke-width="0.9"/></svg>
<div class="t tr" style="left:121.0px;top:391.47px">SMBv1</div>
<svg style="left:91.25px;top:407.64px" width="5" height="8"><path d="M0.5 0.5 L4 4 L0.5 7.5" fill="none" stroke="#9a9a9a" stroke-width="1.2"/></svg>
<svg style="left:103.00px;top:404.64px" width="14" height="14" viewBox="0 0 14 14"><path d="M0.5 2.5 H5.5 L6.5 1 H11.5 V11.5 H0.5 Z" fill="#f3d57f" stroke="#d2a648" stroke-width="1"/><path d="M1.5 3.5 H10.5 V10.5 H1.5 Z" fill="#f9e5a3"/><circle cx="9.8" cy="2.2" r="0.8" fill="#4a9ae0"/><path d="M3 5.5 H7 V10 H3 Z" fill="#c9a23e"/><path d="M3.8 6.5 H6.2 V8.2 H3.8 Z" fill="#f4e2a0"/><path d="M7.5 4.5 H10.5 V10.5 H7.5 Z" fill="#fbe9b0" stroke="#d9b45c" stroke-width="0.5"/></svg>
<div class="t tr" style="left:121.0px;top:406.84px">Laptops</div>
<svg style="left:56.75px;top:424.51px" width="8" height="5"><path d="M0.6 0.8 L4 4.2 L7.4 0.8" fill="none" stroke="#333" stroke-width="1.5"/></svg>
<svg style="left:70.50px;top:420.01px" width="14" height="14" viewBox="0 0 14 14"><path d="M0.5 2.5 H5.5 L6.5 1 H11.5 V11.5 H0.5 Z" fill="#f3d57f" stroke="#d2a648" stroke-width="1"/><path d="M1.5 3.5 H10.5 V10.5 H1.5 Z" fill="#f9e5a3"/><circle cx="9.8" cy="2.2" r="0.8" fill="#4a9ae0"/><path d="M6 4 H12.5 V12 H6 Z" fill="#fbf5d2" stroke="#9c9a92" stroke-width="0.8"/><path d="M7.5 6 H11 M7.5 8 H11" stroke="#8a8aa8" stroke-width="0.8"/></svg>
<div class="t tr" style="left:88.5px;top:422.21px">Gruppenrichtlinienobjekte</div>
<svg style="left:86.75px;top:435.38px" width="14" height="14" viewBox="0 0 14 14"><path d="M3.2 1.5 H12 V10.5 Q11 12 9.5 12.5 H3.2 Z" fill="#fbf6d6" stroke="#a3a19a" stroke-width="0.9"/><path d="M11.3 1 Q13.2 1 12.8 3 L11.5 3" fill="#c9b465" stroke="#9c8a40" stroke-width="0.6"/><path d="M5 4.2 H9.8 M5 6.4 H9.8 M5 8.6 H9.8" stroke="#a4a6c6" stroke-width="0.7"/><path d="M1.3 10.8 H10 Q9 12.5 10 13.2 H1.8 Q0.8 12 1.3 10.8 Z" fill="#f6eab8" stroke="#b3ad90" stroke-width="0.7"/></svg>
<div class="t tr" style="left:104.75px;top:437.58px">Default Domain Controllers Policy</div>
<svg style="left:86.75px;top:450.75px" width="14" height="14" viewBox="0 0 14 14"><path d="M3.2 1.5 H12 V10.5 Q11 12 9.5 12.5 H3.2 Z" fill="#fbf6d6" stroke="#a3a19a" stroke-width="0.9"/><path d="M11.3 1 Q13.2 1 12.8 3 L11.5 3" fill="#c9b465" stroke="#9c8a40" stroke-width="0.6"/><path d="M5 4.2 H9.8 M5 6.4 H9.8 M5 8.6 H9.8" stroke="#a4a6c6" stroke-width="0.7"/><path d="M1.3 10.8 H10 Q9 12.5 10 13.2 H1.8 Q0.8 12 1.3 10.8 Z" fill="#f6eab8" stroke="#b3ad90" stroke-width="0.7"/></svg>
<div class="t tr" style="left:104.75px;top:452.95px">Default Domain Policy</div>
<svg style="left:86.75px;top:466.12px" width="14" height="14" viewBox="0 0 14 14"><path d="M3.2 1.5 H12 V10.5 Q11 12 9.5 12.5 H3.2 Z" fill="#fbf6d6" stroke="#a3a19a" stroke-width="0.9"/><path d="M11.3 1 Q13.2 1 12.8 3 L11.5 3" fill="#c9b465" stroke="#9c8a40" stroke-width="0.6"/><path d="M5 4.2 H9.8 M5 6.4 H9.8 M5 8.6 H9.8" stroke="#a4a6c6" stroke-width="0.7"/><path d="M1.3 10.8 H10 Q9 12.5 10 13.2 H1.8 Q0.8 12 1.3 10.8 Z" fill="#f6eab8" stroke="#b3ad90" stroke-width="0.7"/></svg>
<div class="t tr" style="left:104.75px;top:468.32px">Office2010</div>
<svg style="left:86.75px;top:481.49px" width="14" height="14" viewBox="0 0 14 14"><path d="M3.2 1.5 H12 V10.5 Q11 12 9.5 12.5 H3.2 Z" fill="#fbf6d6" stroke="#a3a19a" stroke-width="0.9"/><path d="M11.3 1 Q13.2 1 12.8 3 L11.5 3" fill="#c9b465" stroke="#9c8a40" stroke-width="0.6"/><path d="M5 4.2 H9.8 M5 6.4 H9.8 M5 8.6 H9.8" stroke="#a4a6c6" stroke-width="0.7"/><path d="M1.3 10.8 H10 Q9 12.5 10 13.2 H1.8 Q0.8 12 1.3 10.8 Z" fill="#f6eab8" stroke="#b3ad90" stroke-width="0.7"/></svg>
<div class="t tr" style="left:104.75px;top:483.69px"><svg style="position:relative;display:inline-block;vertical-align:-2px" width="21" height="10"><rect x="0.00" y="0.0" width="4.50" height="5.3" fill="#d4cddb"/><rect x="4.20" y="0.0" width="4.50" height="5.3" fill="#d4d1d6"/><rect x="8.40" y="0.0" width="4.50" height="5.3" fill="#ccd0cc"/><rect x="12.60" y="0.0" width="4.50" height="5.3" fill="#c8c1c3"/><rect x="16.80" y="0.0" width="4.50" height="5.3" fill="#d3cbcf"/><rect x="0.00" y="5.0" width="4.50" height="5.3" fill="#d2d8d7"/><rect x="4.20" y="5.0" width="4.50" height="5.3" fill="#e3e3e6"/><rect x="8.40" y="5.0" width="4.50" height="5.3" fill="#dadbde"/><rect x="12.60" y="5.0" width="4.50" height="5.3" fill="#c9c5cc"/><rect x="16.80" y="5.0" width="4.50" height="5.3" fill="#d8cbd6"/></svg>_Anmmeldung_Optimierung</div>
<svg style="left:86.75px;top:496.86px" width="14" height="14" viewBox="0 0 14 14"><path d="M3.2 1.5 H12 V10.5 Q11 12 9.5 12.5 H3.2 Z" fill="#fbf6d6" stroke="#a3a19a" stroke-width="0.9"/><path d="M11.3 1 Q13.2 1 12.8 3 L11.5 3" fill="#c9b465" stroke="#9c8a40" stroke-width="0.6"/><path d="M5 4.2 H9.8 M5 6.4 H9.8 M5 8.6 H9.8" stroke="#a4a6c6" stroke-width="0.7"/><path d="M1.3 10.8 H10 Q9 12.5 10 13.2 H1.8 Q0.8 12 1.3 10.8 Z" fill="#f6eab8" stroke="#b3ad90" stroke-width="0.7"/></svg>
<div class="t tr" style="left:104.75px;top:499.06px"><svg style="position:relative;display:inline-block;vertical-align:-2px" width="21" height="10"><rect x="0.00" y="0.0" width="4.50" height="5.3" fill="#d6d2d5"/><rect x="4.20" y="0.0" width="4.50" height="5.3" fill="#c3c4c1"/><rect x="8.40" y="0.0" width="4.50" height="5.3" fill="#cbced2"/><rect x="12.60" y="0.0" width="4.50" height="5.3" fill="#c5c1c6"/><rect x="16.80" y="0.0" width="4.50" height="5.3" fill="#dbe3da"/><rect x="0.00" y="5.0" width="4.50" height="5.3" fill="#eae4e8"/><rect x="4.20" y="5.0" width="4.50" height="5.3" fill="#d5d3ca"/><rect x="8.40" y="5.0" width="4.50" height="5.3" fill="#d2d5d6"/><rect x="12.60" y="5.0" width="4.50" height="5.3" fill="#c8c7c8"/><rect x="16.80" y="5.0" width="4.50" height="5.3" fill="#e1e2ec"/></svg>_Default Domain Policy</div>
<svg style="left:86.75px;top:512.23px" width="14" height="14" viewBox="0 0 14 14"><path d="M3.2 1.5 H12 V10.5 Q11 12 9.5 12.5 H3.2 Z" fill="#fbf6d6" stroke="#a3a19a" stroke-width="0.9"/><path d="M11.3 1 Q13.2 1 12.8 3 L11.5 3" fill="#c9b465" stroke="#9c8a40" stroke-width="0.6"/><path d="M5 4.2 H9.8 M5 6.4 H9.8 M5 8.6 H9.8" stroke="#a4a6c6" stroke-width="0.7"/><path d="M1.3 10.8 H10 Q9 12.5 10 13.2 H1.8 Q0.8 12 1.3 10.8 Z" fill="#f6eab8" stroke="#b3ad90" stroke-width="0.7"/></svg>
<div class="t tr" style="left:104.75px;top:514.43px"><svg style="position:relative;display:inline-block;vertical-align:-2px" width="21" height="10"><rect x="0.00" y="0.0" width="4.50" height="5.3" fill="#b6bdbd"/><rect x="4.20" y="0.0" width="4.50" height="5.3" fill="#c3c3c3"/><rect x="8.40" y="0.0" width="4.50" height="5.3" fill="#d1d9cf"/><rect x="12.60" y="0.0" width="4.50" height="5.3" fill="#ede3e3"/><rect x="16.80" y="0.0" width="4.50" height="5.3" fill="#cbd0ce"/><rect x="0.00" y="5.0" width="4.50" height="5.3" fill="#e0d6de"/><rect x="4.20" y="5.0" width="4.50" height="5.3" fill="#c3c3c4"/><rect x="8.40" y="5.0" width="4.50" height="5.3" fill="#e2e5f1"/><rect x="12.60" y="5.0" width="4.50" height="5.3" fill="#d7d4d3"/><rect x="16.80" y="5.0" width="4.50" height="5.3" fill="#e2d5d6"/></svg>_Drucker</div>
<svg style="left:86.75px;top:527.60px" width="14" height="14" viewBox="0 0 14 14"><path d="M3.2 1.5 H12 V10.5 Q11 12 9.5 12.5 H3.2 Z" fill="#fbf6d6" stroke="#a3a19a" stroke-width="0.9"/><path d="M11.3 1 Q13.2 1 12.8 3 L11.5 3" fill="#c9b465" stroke="#9c8a40" stroke-width="0.6"/><path d="M5 4.2 H9.8 M5 6.4 H9.8 M5 8.6 H9.8" stroke="#a4a6c6" stroke-width="0.7"/><path d="M1.3 10.8 H10 Q9 12.5 10 13.2 H1.8 Q0.8 12 1.3 10.8 Z" fill="#f6eab8" stroke="#b3ad90" stroke-width="0.7"/></svg>
<div class="t tr" style="left:104.75px;top:529.80px"><svg style="position:relative;display:inline-block;vertical-align:-2px" width="21" height="10"><rect x="0.00" y="0.0" width="4.50" height="5.3" fill="#cac4c8"/><rect x="4.20" y="0.0" width="4.50" height="5.3" fill="#bbc2c7"/><rect x="8.40" y="0.0" width="4.50" height="5.3" fill="#ccd2d6"/><rect x="12.60" y="0.0" width="4.50" height="5.3" fill="#dbdfe5"/><rect x="16.80" y="0.0" width="4.50" height="5.3" fill="#d7dad6"/><rect x="0.00" y="5.0" width="4.50" height="5.3" fill="#cfcbd5"/><rect x="4.20" y="5.0" width="4.50" height="5.3" fill="#e1dae4"/><rect x="8.40" y="5.0" width="4.50" height="5.3" fill="#cfd0c6"/><rect x="12.60" y="5.0" width="4.50" height="5.3" fill="#ece8e6"/><rect x="16.80" y="5.0" width="4.50" height="5.3" fill="#bec2c4"/></svg>_Laufwerke</div>
<svg style="left:86.75px;top:542.97px" width="14" height="14" viewBox="0 0 14 14"><path d="M3.2 1.5 H12 V10.5 Q11 12 9.5 12.5 H3.2 Z" fill="#fbf6d6" stroke="#a3a19a" stroke-width="0.9"/><path d="M11.3 1 Q13.2 1 12.8 3 L11.5 3" fill="#c9b465" stroke="#9c8a40" stroke-width="0.6"/><path d="M5 4.2 H9.8 M5 6.4 H9.8 M5 8.6 H9.8" stroke="#a4a6c6" stroke-width="0.7"/><path d="M1.3 10.8 H10 Q9 12.5 10 13.2 H1.8 Q0.8 12 1.3 10.8 Z" fill="#f6eab8" stroke="#b3ad90" stroke-width="0.7"/></svg>
<div class="t tr" style="left:104.75px;top:545.17px"><svg style="position:relative;display:inline-block;vertical-align:-2px" width="21" height="10"><rect x="0.00" y="0.0" width="4.50" height="5.3" fill="#c9d0cc"/><rect x="4.20" y="0.0" width="4.50" height="5.3" fill="#dadcd5"/><rect x="8.40" y="0.0" width="4.50" height="5.3" fill="#cfd7cf"/><rect x="12.60" y="0.0" width="4.50" height="5.3" fill="#d8d9d5"/><rect x="16.80" y="0.0" width="4.50" height="5.3" fill="#b7bbb8"/><rect x="0.00" y="5.0" width="4.50" height="5.3" fill="#efe8ea"/><rect x="4.20" y="5.0" width="4.50" height="5.3" fill="#beb6b8"/><rect x="8.40" y="5.0" width="4.50" height="5.3" fill="#bfc6cb"/><rect x="12.60" y="5.0" width="4.50" height="5.3" fill="#e6deee"/><rect x="16.80" y="5.0" width="4.50" height="5.3" fill="#dadad7"/></svg>_Winlogon_log_OFF</div>
<svg style="left:86.75px;top:558.34px" width="14" height="14" viewBox="0 0 14 14"><path d="M3.2 1.5 H12 V10.5 Q11 12 9.5 12.5 H3.2 Z" fill="#fbf6d6" stroke="#a3a19a" stroke-width="0.9"/><path d="M11.3 1 Q13.2 1 12.8 3 L11.5 3" fill="#c9b465" stroke="#9c8a40" stroke-width="0.6"/><path d="M5 4.2 H9.8 M5 6.4 H9.8 M5 8.6 H9.8" stroke="#a4a6c6" stroke-width="0.7"/><path d="M1.3 10.8 H10 Q9 12.5 10 13.2 H1.8 Q0.8 12 1.3 10.8 Z" fill="#f6eab8" stroke="#b3ad90" stroke-width="0.7"/></svg>
<div class="t tr" style="left:104.75px;top:560.54px"><svg style="position:relative;display:inline-block;vertical-align:-2px" width="21" height="10"><rect x="0.00" y="0.0" width="4.50" height="5.3" fill="#d8cfdd"/><rect x="4.20" y="0.0" width="4.50" height="5.3" fill="#d0d0c6"/><rect x="8.40" y="0.0" width="4.50" height="5.3" fill="#c2bfc3"/><rect x="12.60" y="0.0" width="4.50" height="5.3" fill="#bfc7ba"/><rect x="16.80" y="0.0" width="4.50" height="5.3" fill="#ceced3"/><rect x="0.00" y="5.0" width="4.50" height="5.3" fill="#e5ece7"/><rect x="4.20" y="5.0" width="4.50" height="5.3" fill="#c8d5d8"/><rect x="8.40" y="5.0" width="4.50" height="5.3" fill="#bfc2c5"/><rect x="12.60" y="5.0" width="4.50" height="5.3" fill="#cbd9d4"/><rect x="16.80" y="5.0" width="4.50" height="5.3" fill="#ebe3e2"/></svg>_Winlogon_log_ON</div>
<svg style="left:86.75px;top:573.71px" width="14" height="14" viewBox="0 0 14 14"><path d="M3.2 1.5 H12 V10.5 Q11 12 9.5 12.5 H3.2 Z" fill="#fbf6d6" stroke="#a3a19a" stroke-width="0.9"/><path d="M11.3 1 Q13.2 1 12.8 3 L11.5 3" fill="#c9b465" stroke="#9c8a40" stroke-width="0.6"/><path d="M5 4.2 H9.8 M5 6.4 H9.8 M5 8.6 H9.8" stroke="#a4a6c6" stroke-width="0.7"/><path d="M1.3 10.8 H10 Q9 12.5 10 13.2 H1.8 Q0.8 12 1.3 10.8 Z" fill="#f6eab8" stroke="#b3ad90" stroke-width="0.7"/></svg>
<div class="t tr" style="left:104.75px;top:575.91px">SMBv1</div>
<svg style="left:86.75px;top:589.08px" width="14" height="14" viewBox="0 0 14 14"><path d="M3.2 1.5 H12 V10.5 Q11 12 9.5 12.5 H3.2 Z" fill="#fbf6d6" stroke="#a3a19a" stroke-width="0.9"/><path d="M11.3 1 Q13.2 1 12.8 3 L11.5 3" fill="#c9b465" stroke="#9c8a40" stroke-width="0.6"/><path d="M5 4.2 H9.8 M5 6.4 H9.8 M5 8.6 H9.8" stroke="#a4a6c6" stroke-width="0.7"/><path d="M1.3 10.8 H10 Q9 12.5 10 13.2 H1.8 Q0.8 12 1.3 10.8 Z" fill="#f6eab8" stroke="#b3ad90" stroke-width="0.7"/></svg>
<div class="t tr" style="left:104.75px;top:591.28px">TEST</div>
<svg style="left:58.75px;top:607.45px" width="5" height="8"><path d="M0.5 0.5 L4 4 L0.5 7.5" fill="none" stroke="#9a9a9a" stroke-width="1.2"/></svg>
<svg style="left:70.50px;top:604.45px" width="14" height="14" viewBox="0 0 14 14"><path d="M0.5 2.5 H5.5 L6.5 1 H11.5 V11.5 H0.5 Z" fill="#f3d57f" stroke="#d2a648" stroke-width="1"/><path d="M1.5 3.5 H10.5 V10.5 H1.5 Z" fill="#f9e5a3"/><circle cx="9.8" cy="2.2" r="0.8" fill="#4a9ae0"/><path d="M6 5 H13 L10.5 9 V13 L8.5 12 V9 Z" fill="#a6b2bd" stroke="#6a7680" stroke-width="0.7"/></svg>
<div class="t tr" style="left:88.5px;top:606.65px">WMI-Filter</div>
<svg style="left:58.75px;top:622.82px" width="5" height="8"><path d="M0.5 0.5 L4 4 L0.5 7.5" fill="none" stroke="#9a9a9a" stroke-width="1.2"/></svg>
<svg style="left:70.50px;top:619.82px" width="14" height="14" viewBox="0 0 14 14"><path d="M0.5 2.5 H5.5 L6.5 1 H11.5 V11.5 H0.5 Z" fill="#f3d57f" stroke="#d2a648" stroke-width="1"/><path d="M1.5 3.5 H10.5 V10.5 H1.5 Z" fill="#f9e5a3"/><circle cx="9.8" cy="2.2" r="0.8" fill="#4a9ae0"/><path d="M6 5 H13 V13.5 H6 Z" fill="#a9bdd8" stroke="#55708f" stroke-width="0.8"/><path d="M7.5 7 H11.5 M7.5 9 H11.5 M7.5 11 H11.5" stroke="#36506f" stroke-width="0.8"/></svg>
<div class="t tr" style="left:88.5px;top:622.02px">Starter-Gruppenrichtlinienobjekte</div>
<svg style="left:26.25px;top:638.19px" width="5" height="8"><path d="M0.5 0.5 L4 4 L0.5 7.5" fill="none" stroke="#9a9a9a" stroke-width="1.2"/></svg>
<svg style="left:38.00px;top:635.19px" width="14" height="14" viewBox="0 0 14 14"><path d="M0.5 2.5 H5.5 L6.5 1 H11.5 V11.5 H0.5 Z" fill="#f3d57f" stroke="#d2a648" stroke-width="1"/><path d="M1.5 3.5 H10.5 V10.5 H1.5 Z" fill="#f9e5a3"/><circle cx="9.8" cy="2.2" r="0.8" fill="#4a9ae0"/><path d="M6 5 H13 V13.5 H6 Z" fill="#2f7fd6" stroke="#1a4f90" stroke-width="0.8"/><path d="M7.5 7 H8.5 M10.5 7 H11.5 M7.5 10 H8.5 M10.5 10 H11.5" stroke="#fff" stroke-width="1"/></svg>
<div class="t tr" style="left:56.0px;top:637.39px">Standorte</div>
<svg style="left:26.25px;top:653.56px" width="5" height="8"><path d="M0.5 0.5 L4 4 L0.5 7.5" fill="none" stroke="#9a9a9a" stroke-width="1.2"/></svg>
<svg style="left:38.00px;top:650.56px" width="14" height="14" viewBox="0 0 14 14"><path d="M0.5 2.5 H5.5 L6.5 1 H11.5 V11.5 H0.5 Z" fill="#f3d57f" stroke="#d2a648" stroke-width="1"/><path d="M1.5 3.5 H10.5 V10.5 H1.5 Z" fill="#f9e5a3"/><circle cx="9.8" cy="2.2" r="0.8" fill="#4a9ae0"/><path d="M3 6 H12 V12 H3 Z" fill="#3a6fd0" stroke="#26426e" stroke-width="0.8"/><path d="M0.5 9 H3 V14 H0.5 Z" fill="#9aa4ae"/><circle cx="1.7" cy="10" r="0.8" fill="#2ec52e"/></svg>
<div class="t tr" style="left:56.0px;top:652.76px">Gruppenrichtlinienmodellierung</div>
<svg style="left:38.00px;top:665.93px" width="14" height="14" viewBox="0 0 14 14"><path d="M0.5 2.5 H5.5 L6.5 1 H11.5 V11.5 H0.5 Z" fill="#f3d57f" stroke="#d2a648" stroke-width="1"/><path d="M1.5 3.5 H10.5 V10.5 H1.5 Z" fill="#f9e5a3"/><circle cx="9.8" cy="2.2" r="0.8" fill="#4a9ae0"/><path d="M6 5 H13 V13.5 H6 Z" fill="#f7f7f7" stroke="#808890" stroke-width="0.8"/><path d="M7.5 9 L9 11 L12 7" stroke="#3a6fd0" stroke-width="1" fill="none"/></svg>
<div class="t tr" style="left:56.0px;top:668.13px">Gruppenrichtlinienergebnisse</div>
<svg style="left:276px;top:371px" width="66" height="18"><defs><filter id="sh" x="-10%" y="-30%" width="130%" height="170%"><feGaussianBlur in="SourceAlpha" stdDeviation="1"/><feOffset dx="1" dy="1.5"/><feComponentTransfer><feFuncA type="linear" slope="0.35"/></feComponentTransfer><feMerge><feMergeNode/><feMergeNode in="SourceGraphic"/></feMerge></filter></defs><path filter="url(#sh)" d="M2.6 8.4 L22.4 2.2 L21 7 L60.8 6.9 L60.8 9.9 L21 9.9 L22.4 15 Z" fill="#1ec21e"/></svg>
<div class="ab" style="left:347px;top:64px;width:653px;height:672px;background:#f0f0f0;border-left:1px solid #6e6e6e;border-top:2px solid #7c7c7c"></div>
<div class="ab" style="left:348px;top:66px;width:652px;height:670px;border-left:1px solid #fff;border-top:1px solid #fff;border-bottom:1px solid #fff"></div>
<div class="t" style="left:350px;top:70px;font-size:12.2px;font-weight:bold;letter-spacing:0.1px"><svg style="position:relative;display:inline-block;vertical-align:0px" width="26.4" height="9"><rect x="0.0" y="0" width="4.6" height="9" fill="#cdb9a2"/><rect x="4.4" y="0" width="4.6" height="9" fill="#7f8893"/><rect x="8.8" y="0" width="4.6" height="9" fill="#9298a0"/><rect x="13.2" y="0" width="4.6" height="9" fill="#6f6862"/><rect x="17.6" y="0" width="4.6" height="9" fill="#a5b3c2"/><rect x="22.0" y="0" width="4.6" height="9" fill="#8d8990"/><rect x="22" y="0" width="4.4" height="4" fill="#a9c0d8"/></svg>_Anmmeldung_Optimierung</div>
<div class="ab" style="left:353px;top:86px;width:40.5px;height:16px;background:#f0f0f0;border:1px solid #dadada;border-bottom:none"></div>
<div class="ab" style="left:393.5px;top:86px;width:36.5px;height:16px;background:#f0f0f0;border:1px solid #dadada;border-bottom:none;border-left:none"></div>
<div class="ab" style="left:496px;top:86px;width:56.5px;height:16px;background:#f0f0f0;border:1px solid #dadada;border-bottom:none;border-left:none"></div>
<div class="ab" style="left:351px;top:101.5px;width:649px;height:630.5px;background:#fff;border:1px solid #dadada;border-right:none"></div>
<div class="ab" style="left:430px;top:84.5px;width:66px;height:18px;background:#fff;border:1px solid #dadada;border-bottom:none"></div>
<div class="t" style="left:356.5px;top:90.2px;font-size:10.3px;letter-spacing:-0.7px;color:#111">Bereich</div>
<div class="t" style="left:397px;top:90.2px;font-size:10.3px;letter-spacing:-0.7px;color:#111">Details</div>
<div class="t" style="left:436.5px;top:88.8px;font-size:10.3px;letter-spacing:-0.7px;color:#111">Einstellungen</div>
<div class="t" style="left:500.5px;top:90.2px;font-size:10.3px;letter-spacing:-0.7px;color:#111">Delegierung</div>
<div class="ab" style="left:359px;top:108px;width:641px;height:616px;background:#f9f9f9;border-left:1px solid #6e6e6e;border-top:1px solid #6e6e6e"></div>
<div class="ab" style="left:360px;top:109px;width:640px;height:614px;background:#fff;border-left:1px solid #e3e3e3;border-top:1px solid #e3e3e3"></div>
<div class="ab" style="left:359px;top:723px;width:641px;height:1px;background:#f0f0f0"></div>
<div class="ab" style="left:367px;top:109px;width:633px;height:607px;background:#fff;border-left:1px solid #8a8a8a;border-bottom:1px solid #8a8a8a"></div>
<div class="ab" style="left:415px;top:109px;width:585.00px;height:115.00px;background:#f9f9f9;border-left:1px solid #c8c8c8;border-bottom:1px solid #c8c8c8"></div>
<div class="t rb" style="left:436.5px;top:112.90px;color:#000;">Name</div>
<div class="t rb" style="left:763px;top:112.90px;color:#000;">Zulässige Berechtigungen</div>
<div class="ab" style="left:435.5px;top:125px;width:324.50px;height:1.00px;background:#d4d4d4;"></div>
<div class="ab" style="left:762px;top:125px;width:238.00px;height:1.00px;background:#d4d4d4;"></div>
<div class="t rp" style="left:436.5px;top:132.00px;color:#000;">NT-AUTORITÄT\Authentifizierte Benutzer</div>
<div class="t rp" style="left:763px;top:132.00px;color:#000;">Lesen (durch Sicherheitsfilterung)</div>
<div class="t rp" style="left:436.5px;top:150.25px;color:#000;">NT-AUTORITÄT\DOMÄNENCONTROLLER DER ORGANISATION</div>
<div class="t rp" style="left:763px;top:150.25px;color:#000;">Lesen</div>
<div class="t rp" style="left:436.5px;top:168.50px;color:#000;">NT-AUTORITÄT\SYSTEM</div>
<div class="t rp" style="left:763px;top:168.50px;color:#000;">Einstellungen bearbeiten, löschen, Sicherheit ändern</div>
<div class="t rp" style="left:434.5px;top:186.75px;color:#000;"><svg style="position:relative;display:inline-block;vertical-align:-1px" width="41.5" height="9"><rect x="0.00" y="0.0" width="4.91" height="4.8" fill="#c3bab8"/><rect x="4.61" y="0.0" width="4.91" height="4.8" fill="#d1d1d5"/><rect x="9.22" y="0.0" width="4.91" height="4.8" fill="#dfdfdd"/><rect x="13.83" y="0.0" width="4.91" height="4.8" fill="#d1d6db"/><rect x="18.44" y="0.0" width="4.91" height="4.8" fill="#d0cddc"/><rect x="23.06" y="0.0" width="4.91" height="4.8" fill="#cfcada"/><rect x="27.67" y="0.0" width="4.91" height="4.8" fill="#c5c4d3"/><rect x="32.28" y="0.0" width="4.91" height="4.8" fill="#c7cabc"/><rect x="36.89" y="0.0" width="4.91" height="4.8" fill="#bebfc0"/><rect x="0.00" y="4.5" width="4.91" height="4.8" fill="#dfdddb"/><rect x="4.61" y="4.5" width="4.91" height="4.8" fill="#c2c3ca"/><rect x="9.22" y="4.5" width="4.91" height="4.8" fill="#dedee3"/><rect x="13.83" y="4.5" width="4.91" height="4.8" fill="#b8bdbf"/><rect x="18.44" y="4.5" width="4.91" height="4.8" fill="#e0dce1"/><rect x="23.06" y="4.5" width="4.91" height="4.8" fill="#c6c9ce"/><rect x="27.67" y="4.5" width="4.91" height="4.8" fill="#d2d4dc"/><rect x="32.28" y="4.5" width="4.91" height="4.8" fill="#bec1bc"/><rect x="36.89" y="4.5" width="4.91" height="4.8" fill="#cbd0cd"/></svg>\Domänen-Admins</div>
<div class="t rp" style="left:763px;top:186.75px;color:#000;">Einstellungen bearbeiten, löschen, Sicherheit ändern</div>
<div class="t rp" style="left:434.5px;top:205.00px;color:#000;"><svg style="position:relative;display:inline-block;vertical-align:-1px" width="41.5" height="9"><rect x="0.00" y="0.0" width="4.91" height="4.8" fill="#e9e0ec"/><rect x="4.61" y="0.0" width="4.91" height="4.8" fill="#d9d2df"/><rect x="9.22" y="0.0" width="4.91" height="4.8" fill="#d9dbdb"/><rect x="13.83" y="0.0" width="4.91" height="4.8" fill="#cbcec6"/><rect x="18.44" y="0.0" width="4.91" height="4.8" fill="#cfdbd9"/><rect x="23.06" y="0.0" width="4.91" height="4.8" fill="#c2b9bd"/><rect x="27.67" y="0.0" width="4.91" height="4.8" fill="#d6d9e3"/><rect x="32.28" y="0.0" width="4.91" height="4.8" fill="#e5dbe4"/><rect x="36.89" y="0.0" width="4.91" height="4.8" fill="#bdbfbb"/><rect x="0.00" y="4.5" width="4.91" height="4.8" fill="#b8bec7"/><rect x="4.61" y="4.5" width="4.91" height="4.8" fill="#dddfea"/><rect x="9.22" y="4.5" width="4.91" height="4.8" fill="#c2c0c2"/><rect x="13.83" y="4.5" width="4.91" height="4.8" fill="#e1e2e1"/><rect x="18.44" y="4.5" width="4.91" height="4.8" fill="#cad9da"/><rect x="23.06" y="4.5" width="4.91" height="4.8" fill="#c6bcc2"/><rect x="27.67" y="4.5" width="4.91" height="4.8" fill="#e7dee7"/><rect x="32.28" y="4.5" width="4.91" height="4.8" fill="#c0becb"/><rect x="36.89" y="4.5" width="4.91" height="4.8" fill="#cfd6db"/></svg>\Organisations-Admins</div>
<div class="t rp" style="left:763px;top:205.00px;color:#000;">Einstellungen bearbeiten, löschen, Sicherheit ändern</div>
<div class="ab" style="left:368px;top:225px;width:632.00px;height:26.00px;background:#fef7d6;border-left:1px solid #dad4b8;border-bottom:1px solid #dad4b8;border-top:1px solid #cfcfcf"></div>
<div class="t rb" style="left:375.5px;top:230.20px;color:#3434c8;">Computerkonfiguration (Aktiviert)</div>
<div class="ab" style="left:377px;top:251px;width:623.00px;height:24.40px;background:#7196b4;border-left:1px solid #61819a;border-bottom:1px solid #61819a"></div>
<div class="t rb" style="left:385px;top:256.60px;color:#000;">Richtlinien</div>
<div class="ab" style="left:385px;top:275.4px;width:615.00px;height:25.80px;background:#a1b9cc;border-left:1px solid #8a9faf;border-bottom:1px solid #8a9faf"></div>
<div class="t rb" style="left:393px;top:281.60px;color:#000;">Windows-Einstellungen</div>
<div class="ab" style="left:394px;top:301.2px;width:606.00px;height:25.00px;background:#c0d2de;border-left:1px solid #a5b4be;border-bottom:1px solid #a5b4be"></div>
<div class="t rb" style="left:401.5px;top:307.10px;color:#000;">Sicherheitseinstellungen</div>
<div class="ab" style="left:402.2px;top:326.2px;width:597.80px;height:25.20px;background:#d9e3ea;border-left:1px solid #bac3c9;border-bottom:1px solid #bac3c9"></div>
<div class="t rb" style="left:412.8px;top:331.60px;color:#000;">Lokale Richtlinien/Sicherheitsoptionen</div>
<div class="ab" style="left:415.5px;top:351.4px;width:584.50px;height:25.20px;background:#e8e8e8;border-left:1px solid #c7c7c7;border-bottom:1px solid #c7c7c7"></div>
<div class="t rb" style="left:425.8px;top:357.10px;color:#000;">Interaktive Anmeldung</div>
<div class="ab" style="left:415.5px;top:376.6px;width:584.50px;height:47.90px;background:#f9f9f9;border-left:1px solid #c8c8c8;border-bottom:1px solid #c8c8c8"></div>
<div class="t rb" style="left:436.9px;top:385.60px;color:#000;">Richtlinie</div>
<div class="t rb" style="left:927px;top:385.60px;color:#000;">Einstellung</div>
<div class="ab" style="left:435.6px;top:399.2px;width:488.40px;height:1.00px;background:#d4d4d4;"></div>
<div class="ab" style="left:926px;top:399.2px;width:74.00px;height:1.00px;background:#d4d4d4;"></div>
<div class="t rp" style="left:437px;top:405.90px;color:#000;">Interaktive Anmeldung: Kein STRG+ALT+ENTF erforderlich</div>
<div class="t rp" style="left:927px;top:405.90px;color:#000;">Aktiviert</div>
<div class="ab" style="left:385px;top:427px;width:615.00px;height:24.70px;background:#a1b9cc;border-left:1px solid #8a9faf;border-bottom:1px solid #8a9faf"></div>
<div class="t rb" style="left:392.9px;top:432.40px;color:#000;">Administrative Vorlagen</div>
<div class="ab" style="left:415.3px;top:451.7px;width:584.70px;height:19.60px;background:#f9f9f9;border-left:1px solid #c8c8c8;border-bottom:1px solid #c8c8c8"></div>
<div class="t rp" style="left:433.9px;top:457.00px;color:#000;">Richtliniendefinitionen (ADMX-Dateien) wurden beim lokalen Computer abgerufen.</div>
<div class="ab" style="left:402.4px;top:471.2px;width:597.60px;height:25.50px;background:#d9e3ea;border-left:1px solid #bac3c9;border-bottom:1px solid #bac3c9"></div>
<div class="t rb" style="left:412.7px;top:477.10px;color:#000;">System/Anmelden</div>
<div class="ab" style="left:415.5px;top:496.7px;width:584.50px;height:63.30px;background:#f9f9f9;border-left:1px solid #c8c8c8;border-bottom:1px solid #c8c8c8"></div>
<div class="t rb" style="left:436.9px;top:507.20px;color:#000;">Richtlinie</div>
<div class="t rb" style="left:763px;top:507.20px;color:#000;">Einstellung</div>
<div class="ab" style="left:435.6px;top:519px;width:324.40px;height:1.00px;background:#d4d4d4;"></div>
<div class="ab" style="left:762px;top:519px;width:238.00px;height:1.00px;background:#d4d4d4;"></div>
<div class="t rp" style="left:437px;top:525.40px;color:#0a0af0;letter-spacing:-0.53px">Beim Neustart des Computers und bei der Anmeldung immer auf das Netzwerk</div>
<div class="t rp" style="left:437px;top:540.90px;color:#0a0af0;">warten</div>
<div class="t rp" style="left:763px;top:525.40px;color:#000;">Aktiviert</div>
<div class="ab" style="left:402.4px;top:560px;width:597.60px;height:24.60px;background:#d9e3ea;border-left:1px solid #bac3c9;border-bottom:1px solid #bac3c9"></div>
<div class="t rb" style="left:412.6px;top:564.70px;color:#000;">Windows-Komponenten/Biometrie</div>
<div class="ab" style="left:415.5px;top:584.6px;width:584.50px;height:84.80px;background:#f9f9f9;border-left:1px solid #c8c8c8;border-bottom:1px solid #c8c8c8"></div>
<div class="t rb" style="left:436.9px;top:595.30px;color:#000;">Richtlinie</div>
<div class="t rb" style="left:763px;top:595.30px;color:#000;">Einstellung</div>
<div class="ab" style="left:435.6px;top:607px;width:324.40px;height:1.00px;background:#d4d4d4;"></div>
<div class="ab" style="left:762px;top:607px;width:238.00px;height:1.00px;background:#d4d4d4;"></div>
<div class="t rp" style="left:437px;top:612.90px;color:#0a0af0;letter-spacing:-0.53px">Benutzeranmeldung mithilfe von Biometrie zulassen</div>
<div class="t rp" style="left:763px;top:612.90px;color:#000;">Aktiviert</div>
<div class="t rp" style="left:437px;top:631.20px;color:#0a0af0;letter-spacing:-0.53px">Domänenbenutzeranmeldung mithilfe von Biometrie zulassen</div>
<div class="t rp" style="left:763px;top:631.20px;color:#000;">Aktiviert</div>
<div class="t rp" style="left:437px;top:649.50px;color:#0a0af0;letter-spacing:-0.53px">Verwendung der Biometrie zulassen</div>
<div class="t rp" style="left:763px;top:649.50px;color:#000;">Aktiviert</div>
<div class="ab" style="left:368px;top:670px;width:632.00px;height:26.00px;background:#fef7d6;border-left:1px solid #dad4b8;border-bottom:1px solid #dad4b8;border-top:1px solid #cfcfcf"></div>
<div class="t rb" style="left:376.7px;top:676.80px;color:#3434c8;">Benutzerkonfiguration (Aktiviert)</div>
<div class="ab" style="left:415.5px;top:696px;width:584.50px;height:20.00px;background:#f9f9f9;border-left:1px solid #c8c8c8;border-bottom:1px solid #c8c8c8"></div>
<div class="t rp" style="left:434px;top:701.80px;color:#000;">Keine Einstellungen definiert</div>
</body></html>
